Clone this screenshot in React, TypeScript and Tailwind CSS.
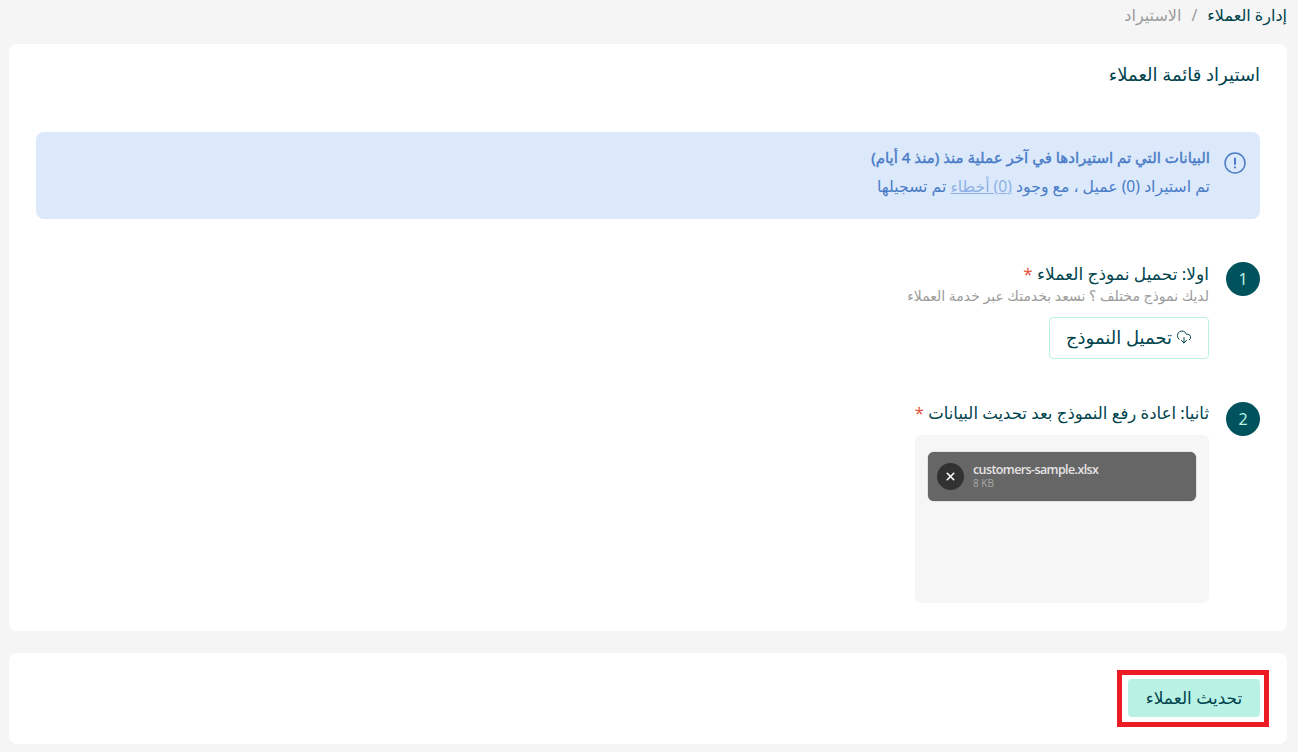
import { CloudDownload, X } from "lucide-react";

function Step({ n, className, children }: { n: number; className: string; children: React.ReactNode }) {
  return (
    <div className={`flex items-start gap-[17px] ${className}`}>
      <div className="flex h-[34px] w-[34px] shrink-0 items-center justify-center rounded-full bg-[#00535c] text-[16px] text-[#b9f2e4]">
        {n}
      </div>
      <div className="flex flex-col items-start">{children}</div>
    </div>
  );
}

export default function App() {
  return (
    <div
      dir="rtl"
      className="h-[752px] w-[1298px] overflow-hidden bg-[#f5f5f5] pl-[9px] pr-[11px] text-[#00434c]"
      style={{ fontFamily: '"Noto Sans", "DejaVu Sans", sans-serif' }}
    >
      <div className="flex h-[44px] items-start gap-[10px] pt-[4px] text-[16px] leading-[22px]">
        <span>إدارة العملاء</span>
        <span className="text-[#9b9b9b]">/</span>
        <span className="text-[#9b9b9b]">الاستيراد</span>
      </div>

      <div className="h-[587px] rounded-lg bg-white pl-[27px] pr-[27px]">
        <h1 className="pt-[17px] text-[18px] leading-[26px]">استيراد قائمة العملاء</h1>

        <div className="mt-[45px] flex h-[87px] items-start gap-[14px] rounded-lg bg-[#dce9fb] pr-[14px] pt-[14px]">
          <svg viewBox="0 0 22 22" className="mt-[6px] h-[22px] w-[22px] shrink-0 text-[#4a7cc7]" fill="none" stroke="currentColor" strokeWidth="1.5" strokeLinecap="round">
            <circle cx="11" cy="11" r="10" />
            <path d="M11 6.5v5.5M11 15.2v.3" strokeWidth="2" />
          </svg>
          <div>
            <p className="text-[15px] leading-[22px] text-[#4a7cc7] [-webkit-text-stroke:0.4px_#4a7cc7]">البيانات التي تم استيرادها في آخر عملية منذ (منذ 4 أيام)</p>
            <p className="mt-[7px] text-[15.7px] leading-[22px] text-[#4a7cc7]">
              تم استيراد (0) عميل ، مع وجود <span className="text-[#8eb2e6] underline">(0) أخطاء</span> تم تسجيلها
            </p>
          </div>
        </div>

        <Step n={1} className="mt-[43px]">
          <p className="text-[17px] leading-[24px]">
            اولا: تحميل نموذج العملاء <span className="text-[#e5533d]">*</span>
          </p>
          <p className="mt-[1px] text-[14px] leading-[18px] text-[#9b9b9b]">لديك نموذج مختلف ؟ نسعد بخدمتك عبر خدمة العملاء</p>
          <button className="mt-[12px] flex h-[42px] w-[160px] items-center justify-center gap-1 rounded border border-[#b9f2e4] pb-[2px] text-[18px]">
            <CloudDownload size={16} strokeWidth={1.5} />
            تحميل النموذج
          </button>
        </Step>

        <Step n={2} className="mt-[43px]">
          <p className="-mt-[1px] text-[16.5px] leading-[24px]">
            ثانيا: اعادة رفع النموذج بعد تحديث البيانات <span className="text-[#e5533d]">*</span>
          </p>
          <div className="mt-[10px] h-[168px] w-[294px] rounded-md bg-[#f6f6f6] p-[13px] pt-[17px]">
            <div dir="ltr" className="flex h-[49px] items-center gap-[9px] rounded-md bg-[#666666] pl-[9px] shadow-[0_0_1px_#444]">
              <div className="flex h-[27px] w-[27px] items-center justify-center rounded-full bg-[#323232] text-white">
                <X size={13} strokeWidth={3} />
              </div>
              <div className="flex flex-col pb-[2px]" style={{ fontFamily: '"Open Sans", sans-serif' }}>
                <span className="text-[12.5px] font-semibold leading-[15px] tracking-[-0.6px] text-[#e4e4e4]">customers-sample.xlsx</span>
                <span className="text-[10px] leading-[12px] text-[#a8a8a8]">8 KB</span>
              </div>
            </div>
          </div>
        </Step>
      </div>

      <div className="mt-[22px] flex h-[91px] items-center rounded-lg bg-white pr-[18px]">
        <div className="border-[5px] border-[#ed1c24] pb-[5px] pl-[6px] pr-[4px] pt-[4px]">
          <button className="flex h-[38px] w-[132px] items-center justify-center rounded bg-[#b9f2e4] text-[17px]">تحديث العملاء</button>
        </div>
      </div>
    </div>
  );
}
